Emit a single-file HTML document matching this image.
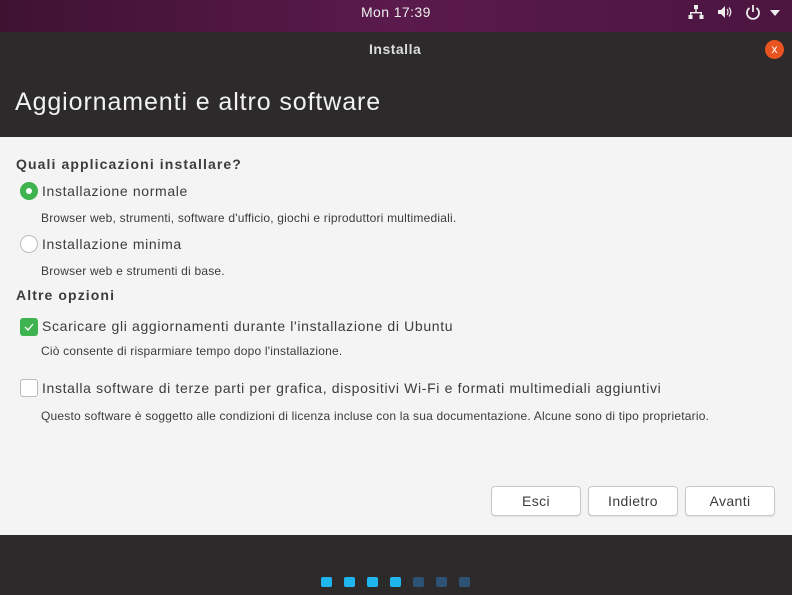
<!DOCTYPE html>
<html><head><meta charset="utf-8"><style>
*{margin:0;padding:0;box-sizing:border-box}
body{width:792px;height:595px;overflow:hidden;font-family:"Liberation Sans",sans-serif;background:#2c2a2b;position:relative}
.top{position:absolute;left:0;top:0;width:792px;height:32px;background:linear-gradient(90deg,#3f1232,#5a1a4c 50%,#4b1540);color:#eee}
.abs{position:absolute;white-space:nowrap}
.win{position:absolute;left:0;top:32px;width:792px;height:105px;background:#2c2a2b}
.content{position:absolute;left:0;top:137px;width:792px;height:398px;background:#f3f4f3;color:#3c3c3c}
.h{font-weight:bold;font-size:14px;letter-spacing:1.1px}
.l{font-size:14px;letter-spacing:0.65px}
.d{font-size:12px;letter-spacing:0.2px}
.btn{position:absolute;top:349px;width:90px;height:30px;border:1px solid #c8c8c8;border-radius:4px;background:#fff;font-size:14px;text-align:center;line-height:28px;color:#3c3c3c;box-shadow:0 1px 1px rgba(0,0,0,.08);letter-spacing:0.4px}
.dot{position:absolute;top:577px;width:11px;height:10px;border-radius:2px}
</style></head><body>
<div class="top">
<div class="abs" style="left:361px;top:4px;font-size:14px;color:#eee;letter-spacing:0.4px">Mon 17:39</div>
<svg class="abs" style="left:688px;top:4px" width="16" height="16" viewBox="0 0 16 16" fill="#eee"><rect x="6" y="1" width="4" height="4"/><rect x="7.3" y="5" width="1.4" height="4"/><rect x="2" y="8" width="12" height="1.4"/><rect x="2" y="8" width="1.4" height="3"/><rect x="12.6" y="8" width="1.4" height="3"/><rect x="0.5" y="11" width="4" height="4"/><rect x="11.5" y="11" width="4" height="4"/></svg>
<svg class="abs" style="left:717px;top:4px" width="16" height="16" viewBox="0 0 16 16"><path d="M1 6h3l4-4v12l-4-4H1z" fill="#eee"/><path d="M10 5q2 3 0 6M12 3.5q3.5 4.5 0 9" stroke="#eee" stroke-width="1.2" fill="none"/></svg>
<svg class="abs" style="left:744px;top:3px" width="18" height="18" viewBox="0 0 18 18"><path d="M5.5 5a6 6 0 1 0 7 0" stroke="#eee" stroke-width="1.8" fill="none"/><path d="M9 2v7" stroke="#eee" stroke-width="1.8"/></svg>
<svg class="abs" style="left:770px;top:10px" width="10" height="6"><path d="M0 0h10L5 6z" fill="#eee"/></svg>
</div>
<div class="win">
<div class="abs" style="left:369px;top:9px;font-size:14px;font-weight:bold;color:#ddd;letter-spacing:0.5px">Installa</div>
<div class="abs" style="left:765px;top:8px;width:19px;height:19px;border-radius:50%;background:#e95420;color:#fff;font-size:12px;text-align:center;line-height:19px">x</div>
<div class="abs" style="left:15px;top:56px;font-size:25px;color:#f2f2f2;letter-spacing:0.9px">Aggiornamenti e altro software</div>
</div>
<div class="content">
<div class="abs h" style="left:16px;top:19px">Quali applicazioni installare?</div>
<div class="abs" style="left:20px;top:45px;width:18px;height:18px;border-radius:50%;background:#3eb34f"><div style="position:absolute;left:6px;top:6px;width:6px;height:6px;border-radius:50%;background:#fff"></div></div>
<div class="abs l" style="left:42px;top:46px">Installazione normale</div>
<div class="abs d" style="left:41px;top:74px">Browser web, strumenti, software d'ufficio, giochi e riproduttori multimediali.</div>
<div class="abs" style="left:20px;top:98px;width:18px;height:18px;border-radius:50%;background:#fff;border:1px solid #bbb"></div>
<div class="abs l" style="left:42px;top:99px">Installazione minima</div>
<div class="abs d" style="left:41px;top:127px">Browser web e strumenti di base.</div>
<div class="abs h" style="left:16px;top:150px">Altre opzioni</div>
<div class="abs" style="left:20px;top:181px;width:18px;height:18px;border-radius:3px;background:#3eb34f"><svg width="18" height="18"><path d="M5 9l3 3 5-6" stroke="#fff" stroke-width="1.3" fill="none"/></svg></div>
<div class="abs l" style="left:42px;top:181px">Scaricare gli aggiornamenti durante l'installazione di Ubuntu</div>
<div class="abs d" style="left:41px;top:207px">Ciò consente di risparmiare tempo dopo l'installazione.</div>
<div class="abs" style="left:20px;top:242px;width:18px;height:18px;border-radius:3px;background:#fff;border:1px solid #bbb"></div>
<div class="abs l" style="left:42px;top:243px">Installa software di terze parti per grafica, dispositivi Wi-Fi e formati multimediali aggiuntivi</div>
<div class="abs d" style="left:41px;top:272px">Questo software è soggetto alle condizioni di licenza incluse con la sua documentazione. Alcune sono di tipo proprietario.</div>
<div class="btn" style="left:491px">Esci</div>
<div class="btn" style="left:588px">Indietro</div>
<div class="btn" style="left:685px">Avanti</div>
</div>
<div class="dot" style="left:321px;background:#1fb6ef"></div>
<div class="dot" style="left:344px;background:#1fb6ef"></div>
<div class="dot" style="left:367px;background:#1fb6ef"></div>
<div class="dot" style="left:390px;background:#1fb6ef"></div>
<div class="dot" style="left:413px;background:#2d5274"></div>
<div class="dot" style="left:436px;background:#2d5274"></div>
<div class="dot" style="left:459px;background:#2d5274"></div>
</body></html>
